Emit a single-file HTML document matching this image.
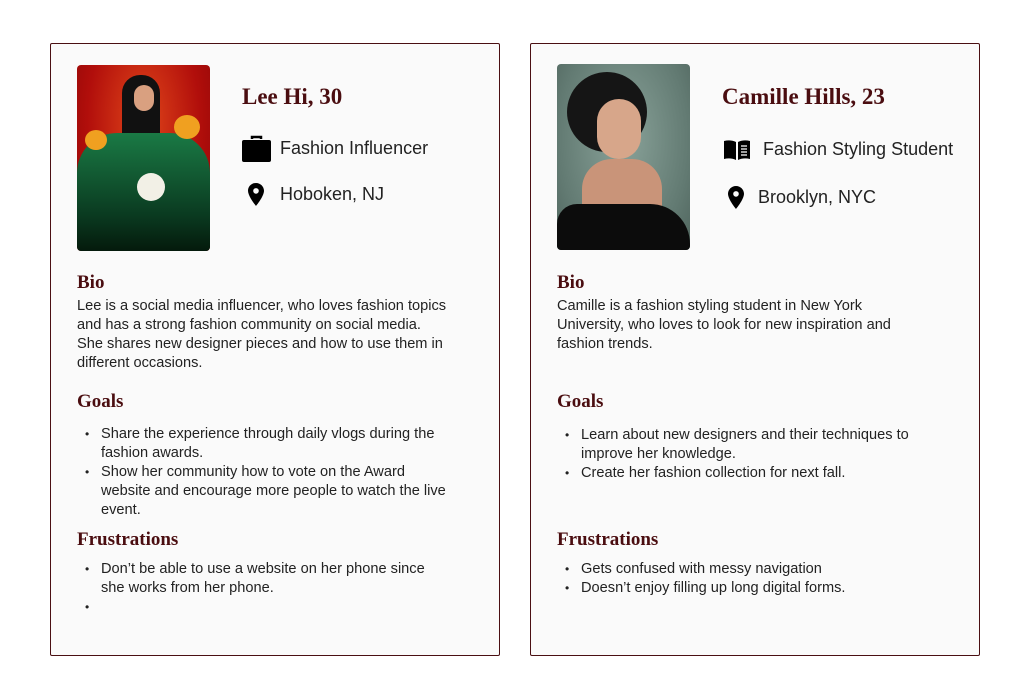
<!DOCTYPE html>
<html><head><meta charset="utf-8"><style>
*{margin:0;padding:0;box-sizing:border-box}
body{width:1030px;height:700px;background:#fff;position:relative;font-family:"Liberation Sans",sans-serif;color:#1a1a1a}
.card{position:absolute;top:43px;width:450px;height:613px;border:1px solid #4a0f12;border-radius:2px;background:#fafafa}
.a{position:absolute;white-space:nowrap}
.name{font-family:"Liberation Serif",serif;font-weight:bold;font-size:23px;color:#4a0d10}
.h{font-family:"Liberation Serif",serif;font-weight:bold;font-size:19px;color:#4a0d10}
.t{font-size:14.6px;line-height:19px;color:#222}
.meta{font-size:18px;color:#222}
ul{list-style:none}
li{position:relative;padding-left:24px}
li:before{content:"•";position:absolute;left:8px;top:0;font-size:12px}
</style></head><body>
<div class="card" style="left:50px">
 <div class="a" style="left:26px;top:21px;width:133px;height:186px;border-radius:4px;overflow:hidden;background:radial-gradient(ellipse at 50% 30%,#e0461a,#b10e0b 60%,#8a0606)">
  <div style="position:absolute;left:45px;top:10px;width:38px;height:90px;background:#111;border-radius:18px 18px 8px 8px"></div>
  <div style="position:absolute;left:57px;top:20px;width:20px;height:26px;background:#d9a080;border-radius:10px"></div>
  <div style="position:absolute;left:0;top:68px;width:133px;height:118px;background:linear-gradient(#1a7a45,#0a3a20 70%,#041a0c);border-radius:40px 40px 0 0"></div>
  <div style="position:absolute;left:8px;top:65px;width:22px;height:20px;background:#f0a020;border-radius:50%"></div>
  <div style="position:absolute;left:97px;top:50px;width:26px;height:24px;background:#f0a020;border-radius:50%"></div>
  <div style="position:absolute;left:60px;top:108px;width:28px;height:28px;background:#f2f0e6;border-radius:50%"></div>
 </div>
 <div class="a name" style="left:191px;top:40px">Lee Hi, 30</div>
 <svg class="a" style="left:191px;top:91px" width="29" height="27" viewBox="0 0 29 27"><path d="M10 4V2h9v2" fill="none" stroke="#000" stroke-width="2.5"/><rect x="0" y="5" width="29" height="22" rx="2" fill="#000"/></svg>
 <div class="a meta" style="left:229px;top:94px">Fashion Influencer</div>
 <svg class="a" style="left:197px;top:139px" width="16" height="23" viewBox="0 0 16 23"><path d="M8 0C3.6 0 0 3.5 0 7.8 0 13.5 8 23 8 23s8-9.5 8-15.2C16 3.5 12.4 0 8 0zm0 10.7a2.8 2.8 0 1 1 0-5.6 2.8 2.8 0 0 1 0 5.6z" fill="#000"/></svg>
 <div class="a meta" style="left:229px;top:140px">Hoboken, NJ</div>
 <div class="a h" style="left:26px;top:228px">Bio</div>
 <div class="a t" style="left:26px;top:253px">Lee is a social media influencer, who loves fashion topics<br>and has a strong fashion community on social media.<br>She shares new designer pieces and how to use them in<br>different occasions.</div>
 <div class="a h" style="left:26px;top:347px">Goals</div>
 <ul class="a t" style="left:26px;top:381px"><li>Share the experience through daily vlogs during the<br>fashion awards.</li><li>Show her community how to vote on the Award<br>website and encourage more people to watch the live<br>event.</li></ul>
 <div class="a h" style="left:26px;top:485px">Frustrations</div>
 <ul class="a t" style="left:26px;top:516px"><li>Don’t be able to use a website on her phone since<br>she works from her phone.</li><li>&nbsp;</li></ul>
</div>
<div class="card" style="left:530px">
 <div class="a" style="left:26px;top:20px;width:133px;height:186px;border-radius:4px;overflow:hidden;background:radial-gradient(ellipse at 50% 40%,#8aa39a,#627a72 70%,#4f645d)">
  <div style="position:absolute;left:10px;top:8px;width:80px;height:80px;background:#151515;border-radius:50%"></div>
  <div style="position:absolute;left:40px;top:35px;width:44px;height:60px;background:#d7a68a;border-radius:22px"></div>
  <div style="position:absolute;left:25px;top:95px;width:80px;height:60px;background:#c99479;border-radius:30px 30px 10px 10px"></div>
  <div style="position:absolute;left:0;top:140px;width:133px;height:46px;background:#0c0c0c;border-radius:20px 40px 0 0"></div>
 </div>
 <div class="a name" style="left:191px;top:40px">Camille Hills, 23</div>
 <svg class="a" style="left:193px;top:96px" width="26" height="20" viewBox="0 0 26 20"><path d="M0 1c4-1 8-1 12 1v18c-4-2-8-2-12-1z" fill="#000"/><path d="M14 2c4-2 8-2 12-1v18c-4-1-8-1-12 1z" fill="#000"/><path d="M17 6h6M17 9h6M17 12h6M17 15h6" stroke="#fff" stroke-width="1.3"/></svg>
 <div class="a meta" style="left:232px;top:95px">Fashion Styling Student</div>
 <svg class="a" style="left:197px;top:142px" width="16" height="23" viewBox="0 0 16 23"><path d="M8 0C3.6 0 0 3.5 0 7.8 0 13.5 8 23 8 23s8-9.5 8-15.2C16 3.5 12.4 0 8 0zm0 10.7a2.8 2.8 0 1 1 0-5.6 2.8 2.8 0 0 1 0 5.6z" fill="#000"/></svg>
 <div class="a meta" style="left:227px;top:143px">Brooklyn, NYC</div>
 <div class="a h" style="left:26px;top:228px">Bio</div>
 <div class="a t" style="left:26px;top:253px">Camille is a fashion styling student in New York<br>University, who loves to look for new inspiration and<br>fashion trends.</div>
 <div class="a h" style="left:26px;top:347px">Goals</div>
 <ul class="a t" style="left:26px;top:382px"><li>Learn about new designers and their techniques to<br>improve her knowledge.</li><li>Create her fashion collection for next fall.</li></ul>
 <div class="a h" style="left:26px;top:485px">Frustrations</div>
 <ul class="a t" style="left:26px;top:516px"><li>Gets confused with messy navigation</li><li>Doesn’t enjoy filling up long digital forms.</li></ul>
</div>
</body></html>
